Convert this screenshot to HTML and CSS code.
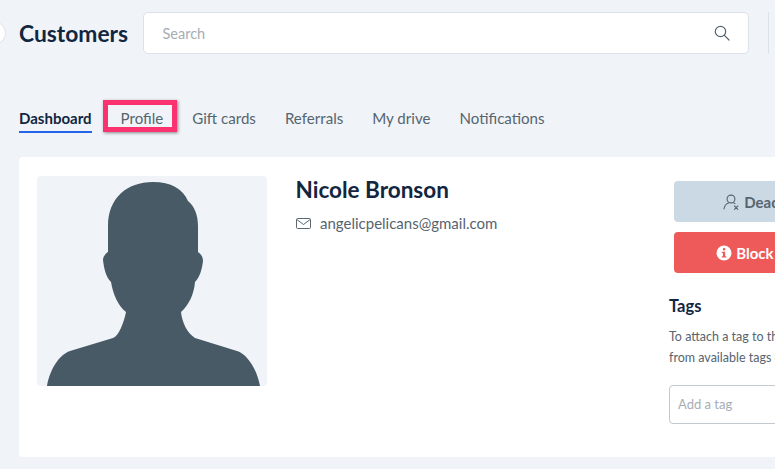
FILE: index.html
```html
<!DOCTYPE html>
<html lang="en">
<head>
<meta charset="utf-8">
<title>Customers</title>
<link rel="stylesheet" href="styles.css">
</head>
<body>
<span class="nav-toggle"></span>
<header class="topbar">
  <h1 class="title">Customers</h1>
  <div class="search">
    <span class="search-text">Search</span>
    <svg class="search-icon" viewBox="0 0 16 16" width="16" height="16" fill="none" stroke="#56646f" stroke-width="1.2"><circle cx="6.500" cy="6.500" r="5.200"/><path d="M10.400 10.400 15 15" stroke-linecap="round"/></svg>
  </div>
  <div class="divider"></div>
</header>
<nav class="tabs">
  <a class="tab tab-active">Dashboard</a>
  <a class="tab tab-marked">Profile<span class="marker"></span></a>
  <a class="tab">Gift cards</a>
  <a class="tab">Referrals</a>
  <a class="tab">My drive</a>
  <a class="tab">Notifications</a>
</nav>
<main class="card">
  <div class="photo">
    <svg viewBox="0 0 230 210" width="230" height="210"><path fill="#475a66" d="M116 6C134 6 146 13 151 25C157 30 161 38 161 50V76C164 78 166 81 166 85C165 93 163 101 158 106C157 118 152 129 144 136C145 146 150 157 158 162L200 175C210 178 220 193 223 210H10C13 193 22 179 33 175L76 162C82 160 87 146 89 136C81 130 76 118 74 106C69 101 67 93 66 84C66 81 68 78 71 76V50C71 22 90 6 116 6Z"/></svg>
  </div>
  <section class="info">
    <h2 class="name">Nicole Bronson</h2>
    <div class="email">
      <svg viewBox="0 0 15 11" width="15" height="11" fill="none" stroke="#5b6872" stroke-width="1"><rect x=".5" y=".5" width="14" height="10" rx="1.200"/><path d="m.8 1.500 6.700 5 6.700-5"/></svg>
      <span>angelicpelicans@gmail.com</span>
    </div>
  </section>
  <aside class="side">
    <button class="btn btn-muted">
      <svg viewBox="0 0 17 16" width="17" height="16" fill="none" stroke="#56646f" stroke-width="1.100" stroke-linecap="round"><circle cx="8" cy="5" r="3.900"/><path d="M1 15c.6-3.400 2.500-5.400 4.800-6.200M10.300 8.700c.6.2 1.200.5 1.700.9M11.500 12l3.300 3.300M14.800 12l-3.300 3.300"/></svg>
      <span>Deactivate</span>
    </button>
    <button class="btn btn-danger">
      <svg viewBox="0 0 16 16" width="16" height="16"><circle cx="8" cy="8" r="7.500" fill="#fff"/><rect x="6.900" y="3" width="2.400" height="2.400" rx="1" fill="#ee5a5a"/><path fill="#ee5a5a" d="M5.800 6.800h3.400v4.400h1.100v1.300H5.800v-1.300h1.100V8.100H5.800z"/></svg>
      <span>Block user</span>
    </button>
    <h3 class="tags-title">Tags</h3>
    <p class="tags-text">To attach a tag to this customer, select<br>from available tags or create a new one</p>
    <div class="tag-input">Add a tag</div>
  </aside>
</main>
</body>
</html>
```
FILE: styles.css
```css
* { box-sizing: border-box; }
html, body { height: 100%; }
body {
  margin: 0;
  width: 775px;
  height: 469px;
  overflow: hidden;
  position: relative;
  padding: 12px 0 0 19px;
  background: #f0f4f8;
  font-family: Lato, "Open Sans", sans-serif;
  color: #12263f;
}
.nav-toggle {
  position: absolute;
  left: -14px;
  top: 22px;
  width: 20px;
  height: 22px;
  border-radius: 50%;
  background: #fff;
  border: 1px solid #dfe5ec;
}
.topbar { display: flex; align-items: center; width: 756px; height: 42px; }
.title { margin: 0; width: 124px; font-size: 22.800px; font-weight: 700; line-height: 42px; color: #12263f; white-space: nowrap; }
.search {
  display: flex;
  align-items: center;
  justify-content: space-between;
  width: 606px;
  height: 42px;
  padding: 0 18px 0 18.500px;
  background: #fff;
  border: 1px solid #dbe2ea;
  border-radius: 5px;
}
.search-text { font-size: 14.500px; color: #a6adb5; }
.search-icon { display: block; }
.divider { width: 1px; height: 42px; margin-left: 19px; background: #dbe2ea; }
.tabs { display: flex; gap: 29px; margin-top: 53px; height: 28px; align-items: flex-start; font-size: 15.100px; line-height: 18px; color: #56646f; }
.tab { display: block; height: 24px; padding-top: 2px; white-space: nowrap; }
.tab-active { font-weight: 700; font-size: 15px; color: #12263f; border-bottom: 2px solid #2563eb; height: 26px; }
.tab-marked { position: relative; }
.marker {
  position: absolute;
  left: -18px;
  top: -7px;
  width: 74px;
  height: 32px;
  border: 5px solid #fb3270;
  box-shadow: 1px 1px 3px rgba(0, 0, 0, .45);
}
.card {
  display: flex;
  width: 830px;
  height: 300px;
  margin-top: 22px;
  padding: 19px 18px;
  background: #fff;
  border-radius: 4px;
}
.photo { flex: none; width: 230px; height: 210px; border-radius: 4px; background: #f0f4f8; overflow: hidden; }
.photo svg { display: block; }
.info { flex: none; width: 402px; padding-left: 28.500px; }
.name { margin: 0; font-size: 22.500px; line-height: 28px; font-weight: 700; color: #12263f; }
.email { display: flex; align-items: center; gap: 9.500px; margin-top: 10px; font-size: 15px; line-height: 18px; color: #56646f; }
.side { flex: none; width: 300px; padding-top: 5px; }
.btn {
  display: flex;
  align-items: center;
  justify-content: center;
  gap: 4px;
  width: 192px;
  height: 41px;
  margin: 0 0 10px 5px;
  border: 0;
  border-radius: 4px;
  font: 700 15px Lato, sans-serif;
}
.btn-muted { background: #cbd9e4; color: #56646f; }
.btn-danger { background: #ee5a5a; color: #fff; padding-right: 24px; }
.tags-title { margin: 23px 0 0; font-size: 16.500px; line-height: 20px; font-weight: 700; color: #12263f; }
.tags-text { margin: 10px 0 0; font-size: 12.500px; line-height: 21px; color: #56646f; white-space: nowrap; }
.tag-input {
  width: 200px;
  height: 39px;
  margin-top: 17px;
  padding: 0 8px;
  border: 1px solid #c2c9d1;
  border-radius: 4px;
  font-size: 13px;
  line-height: 37px;
  color: #a6adb5;
}
```
